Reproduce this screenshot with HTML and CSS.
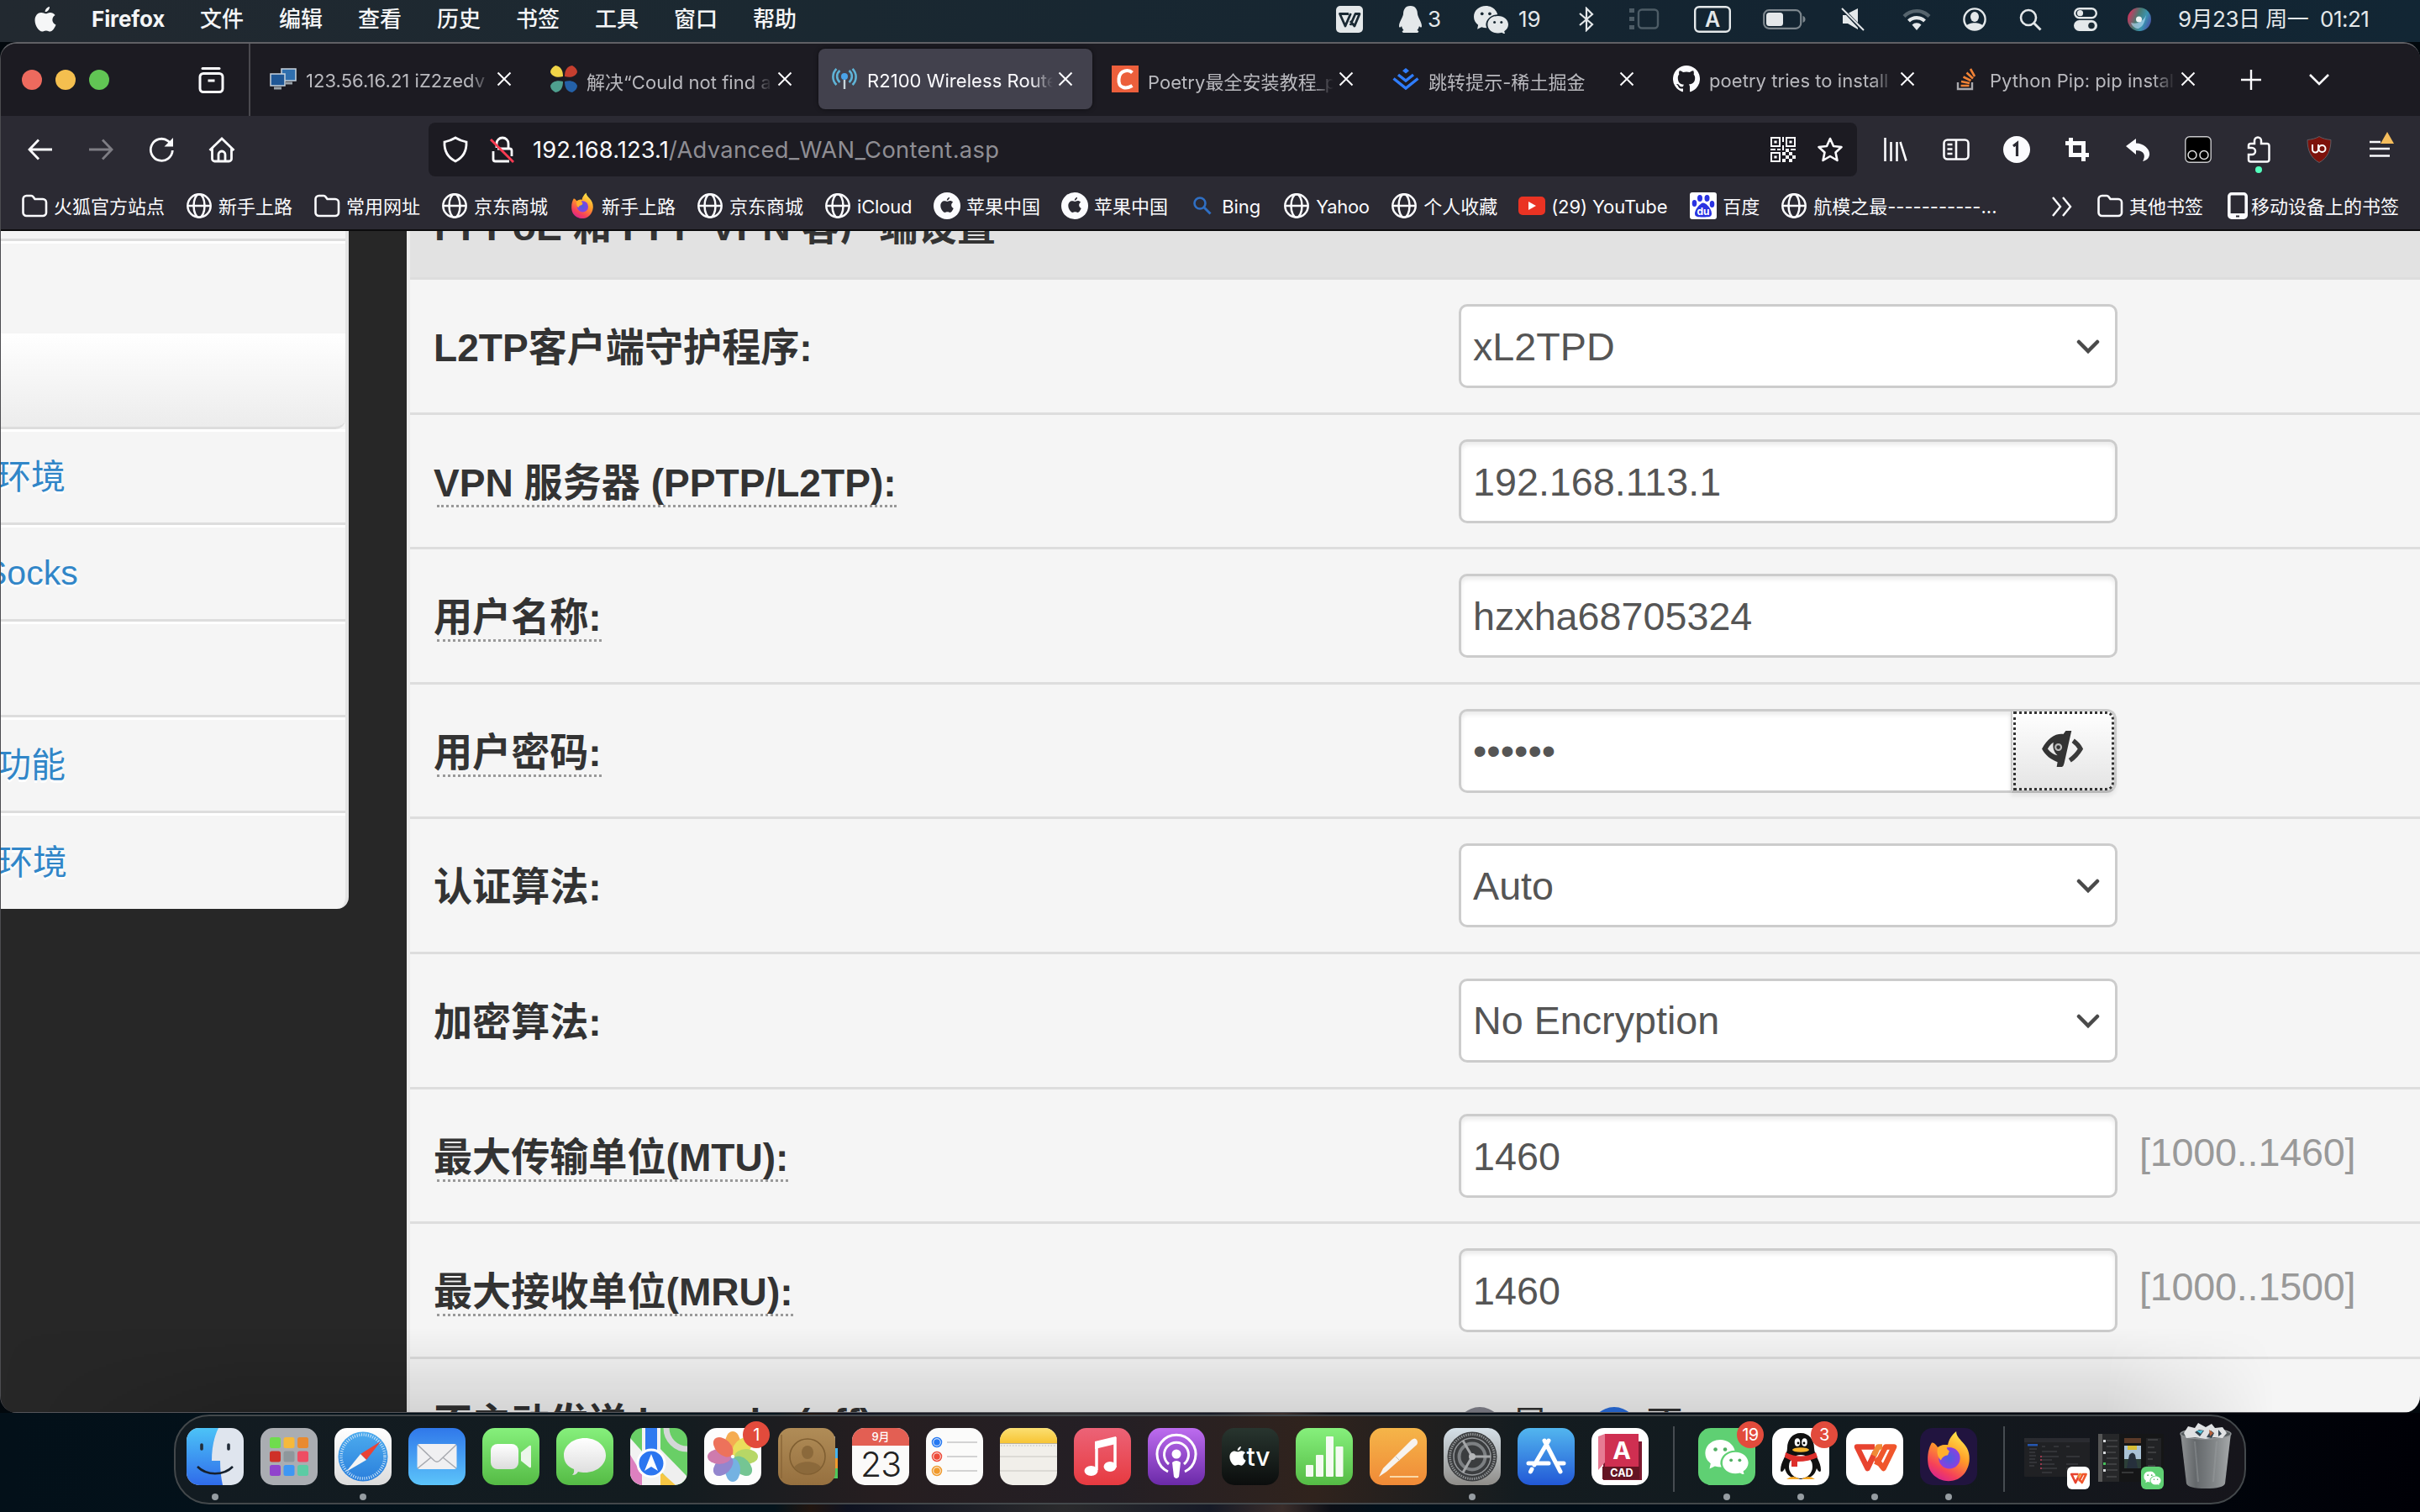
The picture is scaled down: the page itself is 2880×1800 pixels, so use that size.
FILE: index.html
```html
<!DOCTYPE html>
<html lang="zh-CN">
<head>
<meta charset="utf-8">
<title>R2100 Wireless Router</title>
<link rel="stylesheet" href="styles.css">
</head>
<body>
<svg class="defs" width="0" height="0">
  <defs>
    <linearGradient id="gBlue" x1="0" y1="0" x2="0" y2="1"><stop offset="0" stop-color="#3078ea"/><stop offset="1" stop-color="#5cc4fa"/></linearGradient>
    <linearGradient id="gFace" x1="0" y1="0" x2="0" y2="1"><stop offset="0" stop-color="#4cc3f7"/><stop offset="1" stop-color="#2f6bea"/></linearGradient>
    <linearGradient id="gSky" x1="0" y1="0" x2="0" y2="1"><stop offset="0" stop-color="#4cabee"/><stop offset="1" stop-color="#2a7fdc"/></linearGradient>
    <linearGradient id="gGreen" x1="0" y1="0" x2="0" y2="1"><stop offset="0" stop-color="#86f07c"/><stop offset="1" stop-color="#55bb45"/></linearGradient>
    <linearGradient id="gWhite" x1="0" y1="0" x2="0" y2="1"><stop offset="0" stop-color="#fff"/><stop offset="1" stop-color="#dcdcdc"/></linearGradient>
    <linearGradient id="gRed" x1="0" y1="0" x2="0" y2="1"><stop offset="0" stop-color="#ec6377"/><stop offset="1" stop-color="#e73a40"/></linearGradient>
    <linearGradient id="gPurple" x1="0" y1="0" x2="0" y2="1"><stop offset="0" stop-color="#bd6cef"/><stop offset="1" stop-color="#6b2aa8"/></linearGradient>
    <linearGradient id="gOrange" x1="0" y1="0" x2="0" y2="1"><stop offset="0" stop-color="#f5b549"/><stop offset="1" stop-color="#f08a37"/></linearGradient>
    <linearGradient id="gStore" x1="0" y1="0" x2="0" y2="1"><stop offset="0" stop-color="#52b6ef"/><stop offset="1" stop-color="#2258d6"/></linearGradient>
    <linearGradient id="gGear" x1="0" y1="0" x2="0" y2="1"><stop offset="0" stop-color="#d5e0e8"/><stop offset="1" stop-color="#8f8d89"/></linearGradient>
    <linearGradient id="gTv" x1="0" y1="0" x2="0" y2="1"><stop offset="0" stop-color="#28352f"/><stop offset="1" stop-color="#0b0d0d"/></linearGradient>
    <linearGradient id="gBook" x1="0" y1="0" x2="0" y2="1"><stop offset="0" stop-color="#b08c57"/><stop offset="1" stop-color="#96703f"/></linearGradient>
    <linearGradient id="gYellow" x1="0" y1="0" x2="0" y2="1"><stop offset="0" stop-color="#fbdf72"/><stop offset="1" stop-color="#f7c434"/></linearGradient>
    <linearGradient id="gFox" x1=".8" y1="0" x2=".3" y2="1"><stop offset="0" stop-color="#fff14f"/><stop offset=".45" stop-color="#ff9a28"/><stop offset=".8" stop-color="#f5405a"/><stop offset="1" stop-color="#d9258e"/></linearGradient>
    <radialGradient id="gOrb"><stop offset="0" stop-color="#4a5fe0"/><stop offset="1" stop-color="#8a3fe0"/></radialGradient>
    <linearGradient id="gCan" x1="0" y1="0" x2="1" y2="0"><stop offset="0" stop-color="#8f9294"/><stop offset=".3" stop-color="#64686b"/><stop offset=".7" stop-color="#84888a"/><stop offset="1" stop-color="#a6a9ab"/></linearGradient>
    <linearGradient id="gSiri" x1="0" y1=".3" x2="1" y2=".7"><stop offset="0" stop-color="#d8305c"/><stop offset=".4" stop-color="#4a7a72"/><stop offset=".7" stop-color="#3a94b0"/><stop offset="1" stop-color="#4a4fa8"/></linearGradient>
  </defs>
  <symbol id="apple" viewBox="0 0 26 32"><path d="M18 1c.2 3-2.300 6.200-5.300 6.300C12.400 4.500 15 1.500 18 1zM13.300 9.300c1.300 0 3-1.400 5.600-1.400 2 0 4.300 1 5.700 3-4.800 2.900-4 9.600.9 11.500-1 2.900-3.900 8.100-6.900 8.100-1.800 0-2.500-1.100-4.700-1.100-2.300 0-3.100 1.100-4.800 1.100C5.300 30.500.5 23.500.5 17.300c0-6 3.900-9.200 7.500-9.200 2.300 0 4 1.200 5.300 1.200z" fill="currentColor"/></symbol>
  <symbol id="folder" viewBox="0 0 32 32"><path d="M2.500 8a4 4 0 0 1 4-4h5.500a3 3 0 0 1 2.500 1.200L16.500 8H26a4 4 0 0 1 4 4v12a4 4 0 0 1-4 4H6.500a4 4 0 0 1-4-4z" fill="none" stroke="currentColor" stroke-width="2.600"/></symbol>
  <symbol id="globe" viewBox="0 0 32 32"><g fill="none" stroke="currentColor" stroke-width="2.500"><circle cx="16" cy="16" r="13.700"/><ellipse cx="16" cy="16" rx="6.500" ry="13.700"/><path d="M2.300 16h27.400"/></g></symbol>
  <symbol id="fox" viewBox="0 0 68 68"><path d="M12 16c3-1 6 3 8 6 4-3 9-4 13-3C34 12 38 6 44 1c0 6 4 9 8 14 7 7 10 15 9 25-2 16-13 26-27 26S8 56 7 42C6 32 8 23 12 16z" fill="url(#gFox)"/><circle cx="35" cy="36" r="14" fill="url(#gOrb)"/><path d="M20 22c4-3 9-4 13-3-2 3-2 5 2 8l-2 5c-5 1-8 3-9 7-4-4-6-10-4-17z" fill="#ffb02c"/></symbol>
  <symbol id="wchat" viewBox="0 0 40 32"><g fill="currentColor"><path d="M14 0C6 0 0 5.500 0 12.500c0 4 2 7.200 5 9.500l-1 5 5-2.500c2 .6 4 1 6 .9A11 11 0 0 1 14 22c0-6.500 6-12 13.500-12C26 4 20.500 0 14 0z"/><path d="M28 11.500c-7 0-12 4.600-12 10s5 10 12 10c1.500 0 3-.2 4.300-.6l4 2-1-3.600c3-2 4.700-4.800 4.700-7.800 0-5.400-5-10-12-10z"/></g><g fill="var(--eye)"><circle cx="9.500" cy="9" r="1.800"/><circle cx="18.500" cy="9" r="1.800"/><circle cx="24" cy="19" r="1.500"/><circle cx="32" cy="19" r="1.500"/></g></symbol>
  <symbol id="wps" viewBox="0 0 68 68"><g fill="none" stroke-width="6.500" stroke-linejoin="round"><path d="M34 22.500H13L25.500 48 35 28" stroke="#e8432f"/><path d="M35 36l9.500 12L57 22.500H47L36 44" stroke="#f0562c"/><path d="M33 33l5-10.500h5" stroke="#f08a36"/></g></symbol>
  <symbol id="close" viewBox="0 0 20 20"><path d="M2.500 2.500l15 15M17.500 2.500l-15 15" stroke="#fbfbfe" stroke-width="2" fill="none"/></symbol>
</svg>

<header class="menubar">
  <nav class="menus">
    <svg class="apple-mark" viewBox="0 0 26 32"><use href="#apple"/></svg>
    <span class="app-name">Firefox</span><span>文件</span><span>编辑</span><span>查看</span><span>历史</span><span>书签</span><span>工具</span><span>窗口</span><span>帮助</span>
  </nav>
  <div class="status">
    <svg width="32" height="32" viewBox="0 0 32 32"><rect width="32" height="32" rx="5" fill="#e4e8ea"/><path d="M15 9.500H4.500L11 24l6.500-15M17 18l5 6 6-14.500h-5L17 23" fill="none" stroke="#1a2933" stroke-width="2.800" stroke-linejoin="round"/></svg>
    <svg width="27" height="32" viewBox="0 0 27 32"><path d="M13.500 0C7 0 5 5 5 10c-1 5-5 9-5 14 0 2 1.500 2 3 0 .5 2 1.500 4 2.500 5-3 1-2 3 1 3h14c3 0 4-2 1-3 1-1 2-3 2.500-5 1.500 2 3 2 3 0 0-5-4-9-5-14 0-5-2-10-8.500-10z" fill="#e4e8ea"/></svg>
    <span>3</span>
    <svg class="wx-status" width="41" height="33" viewBox="0 0 40 32"><use href="#wchat"/></svg>
    <span>19</span>
    <svg width="18" height="30" viewBox="0 0 18 30"><path d="M1 8l15 13-7 7V2l7 7L1 22" fill="none" stroke="#e4e8ea" stroke-width="2.200"/></svg>
    <svg width="36" height="26" viewBox="0 0 36 26"><rect x="11" y="1.500" width="23" height="22" rx="4" fill="none" stroke="#4d5c66" stroke-width="2.400"/><path d="M0 0h6v5H0zM0 10h6v5H0zM0 20h6v5H0z" fill="#4d5c66"/></svg>
    <svg width="44" height="32" viewBox="0 0 44 32"><rect x="1.200" y="1.200" width="41.600" height="29.600" rx="5" fill="none" stroke="#e4e8ea" stroke-width="2.400"/><text x="22" y="25" text-anchor="middle" class="input-letter">A</text></svg>
    <svg width="51" height="24" viewBox="0 0 51 24"><rect x="1.200" y="1.200" width="44" height="21.600" rx="6" fill="none" stroke="#7d878e" stroke-width="2.200"/><rect x="4" y="4" width="20" height="16" rx="3.500" fill="#e4e8ea"/><path d="M47.500 8v8c2-.6 3-2.200 3-4s-1-3.400-3-4z" fill="#7d878e"/></svg>
    <svg width="28" height="28" viewBox="0 0 28 28"><path d="M20 1v17L9 6.500zM2 9h4l14 15v2L8 19H2z" fill="#e4e8ea"/><path d="M1 1l26 26" stroke="#e4e8ea" stroke-width="2"/></svg>
    <svg width="34" height="26" viewBox="0 0 34 26"><g fill="none" stroke-width="4.200"><path d="M2 9.500a21 21 0 0 1 30 0" stroke="#56646d"/><path d="M7.500 15a13.500 13.500 0 0 1 19 0" stroke="#e4e8ea"/></g><path d="M17 26l-5.500-6.500a8 8 0 0 1 11 0z" fill="#e4e8ea"/></svg>
    <svg width="28" height="28" viewBox="0 0 28 28"><circle cx="14" cy="14" r="12.600" fill="none" stroke="#e4e8ea" stroke-width="2.400"/><ellipse cx="14" cy="11" rx="5" ry="6" fill="#e4e8ea"/><path d="M4 22c3-5 17-5 20 0-5 6-15 6-20 0z" fill="#e4e8ea"/></svg>
    <svg width="27" height="27" viewBox="0 0 27 27"><circle cx="11" cy="11" r="9" fill="none" stroke="#e4e8ea" stroke-width="2.600"/><path d="M17.500 17.500l8 8" stroke="#e4e8ea" stroke-width="3"/></svg>
    <svg width="28" height="28" viewBox="0 0 28 28"><rect x="1.200" y="1.200" width="25.600" height="11" rx="5.500" fill="none" stroke="#e4e8ea" stroke-width="2.400"/><circle cx="7.500" cy="6.700" r="3.600" fill="#e4e8ea"/><rect y="15" width="28" height="13" rx="6.500" fill="#e4e8ea"/><circle cx="21" cy="21.500" r="3.800" fill="#1a2933"/></svg>
    <svg width="28" height="28" viewBox="0 0 28 28"><circle cx="14" cy="14" r="14" fill="url(#gSiri)"/><path d="M4 18c6 2 14 0 18-9-2 9-3 13-9 16C9 25 5 22 4 18z" fill="#bfe3ff" opacity=".6"/><circle cx="13.500" cy="14" r="3.500" fill="#fff" opacity=".9"/></svg>
    <span class="clock">9月23日 周一&nbsp; 01:21</span>
  </div>
</header>

<main class="window">
  <div class="tabbar">
    <div class="win-controls"><i class="light red"></i><i class="light amber"></i><i class="light green"></i>
      <svg class="archive" width="32" height="32" viewBox="0 0 32 32"><g fill="none" stroke="#fbfbfe" stroke-width="3"><path d="M6 2.500h20" stroke-linecap="round"/><rect x="3" y="8.500" width="27" height="22" rx="4"/></g><rect x="12.500" y="15.500" width="8" height="3" fill="#fbfbfe"/></svg>
    </div>
    <div class="tabs">
      <div class="tab">
        <svg width="32" height="32" viewBox="0 0 32 32"><rect x="14" y="4" width="17" height="14" fill="#2f6fae" stroke="#c8d4de" stroke-width="1.500"/><rect x="1" y="10" width="17" height="14" fill="#1f5796" stroke="#c8d4de" stroke-width="1.500"/><path d="M5 27h9M19 21h8" stroke="#9aa3aa" stroke-width="3"/></svg>
        <span class="title">123.56.16.21 iZ2zedv</span><svg class="x" width="20" height="20"><use href="#close"/></svg></div>
      <div class="tab">
        <svg width="32" height="32" viewBox="0 0 32 32"><path d="M6 0c6 1 9 5 9 13C8 15 2 13 0 8c0-3 2-6 6-8z" fill="#f0d447"/><path d="M26 0c-6 1-9 5-9 13 7 2 13 0 15-5 0-3-2-6-6-8z" fill="#c63f2f"/><path d="M6 32c6-1 9-5 9-13-7-2-13 0-15 5 0 3 2 6 6 8z" fill="#4fa08f"/><path d="M26 32c-6-1-9-5-9-13 7-2 13 0 15 5 0 3-2 6-6 8z" fill="#2461a8"/></svg>
        <span class="title">解决“Could not find a</span><svg class="x" width="20" height="20"><use href="#close"/></svg></div>
      <div class="tab active">
        <svg width="32" height="32" viewBox="0 0 32 32"><g fill="none" stroke="#5fb3d6" stroke-width="2.600"><path d="M10.500 20a9 9 0 0 1 0-14M21.500 20a9 9 0 0 0 0-14M6.500 23a13 13 0 0 1 0-19M25.500 23a13 13 0 0 0 0-19"/></g><circle cx="16" cy="13" r="4" fill="#4aa3e8"/><path d="M16 17v11" stroke="#c9d6dc" stroke-width="2.400"/></svg>
        <span class="title">R2100 Wireless Route</span><svg class="x" width="20" height="20"><use href="#close"/></svg></div>
      <div class="tab">
        <svg width="32" height="32" viewBox="0 0 32 32"><rect width="32" height="32" fill="#ec5f3c"/><path d="M24.500 8.500C21 5 9.500 4 8.500 16S18 28 24.500 24" fill="none" stroke="#fff" stroke-width="4"/></svg>
        <span class="title">Poetry最全安装教程_p</span><svg class="x" width="20" height="20"><use href="#close"/></svg></div>
      <div class="tab">
        <svg width="32" height="32" viewBox="0 0 32 32"><path d="M16 3l4 3.200-4 3.200-4-3.200z" fill="#2f7dff"/><path d="M7 11l9 7 9-7M1.500 15.500L16 27l14.500-11.500" fill="none" stroke="#2f7dff" stroke-width="3.400"/></svg>
        <span class="title">跳转提示-稀土掘金</span><svg class="x" width="20" height="20"><use href="#close"/></svg></div>
      <div class="tab">
        <svg width="32" height="32" viewBox="0 0 16 16"><path d="M8 0a8 8 0 0 0-2.500 15.600c.4.100.5-.2.500-.4v-1.500c-2.200.5-2.700-1-2.700-1-.4-.9-.9-1.200-.9-1.200-.7-.5.100-.5.100-.5.800.1 1.200.8 1.200.8.700 1.200 1.900.9 2.300.7.100-.5.300-.9.500-1.100-1.800-.2-3.600-.9-3.600-4 0-.9.300-1.600.8-2.100-.1-.2-.4-1 .1-2.100 0 0 .7-.2 2.200.8a7.700 7.700 0 0 1 4 0c1.500-1 2.200-.8 2.200-.8.400 1.100.2 1.900.1 2.100.5.600.8 1.300.8 2.100 0 3.100-1.900 3.700-3.700 3.900.3.300.6.800.6 1.500v2.400c0 .2.100.5.500.4A8 8 0 0 0 8 0z" fill="#fbfbfe"/></svg>
        <span class="title">poetry tries to install</span><svg class="x" width="20" height="20"><use href="#close"/></svg></div>
      <div class="tab">
        <svg width="32" height="32" viewBox="0 0 32 32"><path d="M5 20v8h17v-8" fill="none" stroke="#a9a9ad" stroke-width="2.400"/><path d="M8.500 24h10M9 19l10 2M11.500 13.500l9 4.500M15.500 8.500l7.500 7M20 4l5 9" stroke="#ef8236" stroke-width="2.600"/></svg>
        <span class="title">Python Pip: pip instal</span><svg class="x" width="20" height="20"><use href="#close"/></svg></div>
    </div>
    <div class="tab-tools">
      <svg width="26" height="26" viewBox="0 0 26 26"><path d="M13 1v24M1 13h24" stroke="#fbfbfe" stroke-width="2.400"/></svg>
      <svg width="26" height="16" viewBox="0 0 26 16"><path d="M2 2l11 11L24 2" fill="none" stroke="#fbfbfe" stroke-width="2.600"/></svg>
    </div>
  </div>

  <div class="toolbar">
    <div class="nav-icons">
      <svg width="32" height="32" viewBox="0 0 32 32"><path d="M14 4.500L3 16l11 11.500M3.500 16H30" fill="none" stroke="#fbfbfe" stroke-width="2.800"/></svg>
      <svg width="32" height="32" viewBox="0 0 32 32"><path d="M18 4.500L29 16 18 27.500M28.500 16H2" fill="none" stroke="#7e7d84" stroke-width="2.800"/></svg>
      <svg width="32" height="32" viewBox="0 0 32 32"><path d="M29.300 17A13 13 0 1 1 24 5.800l3.500 3.500" fill="none" stroke="#fbfbfe" stroke-width="2.800"/><path d="M30 2v10.500H19.500z" fill="#fbfbfe"/></svg>
      <svg width="32" height="32" viewBox="0 0 32 32"><path d="M1.500 17L16 3l14.500 14M4.500 14.500V27a3 3 0 0 0 3 3h17a3 3 0 0 0 3-3V14.500M12 30v-8a4 4 0 0 1 8 0v8" fill="none" stroke="#fbfbfe" stroke-width="2.800"/></svg>
    </div>
    <div class="urlbar">
      <svg width="32" height="32" viewBox="0 0 32 32"><path d="M16 2c4 2.500 8.500 4 13 5 .5 11-4 18.500-13 23C7 25.500 2.500 18 3 7c4.500-1 9-2.500 13-5z" fill="none" stroke="#fbfbfe" stroke-width="2.800"/></svg>
      <svg class="lock" width="32" height="32" viewBox="0 0 32 32"><path d="M9 14V9a7 7 0 0 1 14 0v5M5 18v9.500A2.500 2.500 0 0 0 7.500 30H24M10 15h14.500a2.500 2.500 0 0 1 2.500 2.500V24" fill="none" stroke="#fbfbfe" stroke-width="2.800"/><path d="M2 4l27 27" stroke="#ff3b52" stroke-width="2.800"/></svg>
      <span class="url"><b>192.168.123.1</b>/Advanced_WAN_Content.asp</span>
      <svg class="qr" width="30" height="30" viewBox="0 0 15 15" fill="#fbfbfe"><path fill-rule="evenodd" d="M0 0h6v6H0zM1 1v4h4V1zM9 0h6v6H9zM10 1v4h4V1zM0 9h6v6H0zM1 10v4h4v-4z"/><path d="M2.200 2.200h1.600v1.600H2.200zM11.200 2.200h1.600v1.600h-1.600zM2.200 11.200h1.600v1.600H2.200zM7 0h1v3H7zM7 5h1v3H7zM0 7h3v1H0zM4 7h2v1H4zM9 7h2v2H9zM12 7h3v1h-3zM7 9h2v2H7zM11 9h2v2h-2zM9 11h2v2H9zM13 11h2v2h-2zM7 13h2v2H7zM11 13h2v2h-2z"/></svg>
      <svg width="32" height="32" viewBox="0 0 32 32"><path d="M16 3l4 9 9.500 1-7 6.500 2 9.500L16 24l-8.500 5 2-9.500-7-6.500L12 12z" fill="none" stroke="#fbfbfe" stroke-width="2.600" stroke-linejoin="round"/></svg>
    </div>
    <div class="ext-icons">
      <svg viewBox="0 0 32 32"><path d="M3.500 2v28M10.500 7v23M17.500 7v23M21.500 7l7 22.500" fill="none" stroke="#fbfbfe" stroke-width="2.600"/></svg>
      <svg viewBox="0 0 32 32"><g fill="none" stroke="#fbfbfe" stroke-width="2.600"><rect x="1.500" y="4.500" width="29" height="23" rx="4"/><path d="M16 4v24M5.500 10h6M5.500 15.500h6M5.500 21h6"/></g></svg>
      <svg viewBox="0 0 32 32"><circle cx="16" cy="16" r="16" fill="#fbfbfe"/><path d="M12 12l4.500-3.500V24" fill="none" stroke="#2b2a33" stroke-width="3.200"/></svg>
      <svg viewBox="0 0 32 32"><path d="M8.500 2v20.500H30M2 8.500h21.500V30" fill="none" stroke="#fbfbfe" stroke-width="5"/></svg>
      <svg viewBox="0 0 32 32"><path d="M2 12L14 3v5.500c10 0 17 8 16 14-1 4-2.500 6-8 7.500 4-7 1.500-13-8-13V22z" fill="#fbfbfe"/></svg>
      <svg viewBox="0 0 32 32"><rect x=".8" y=".8" width="30.400" height="30.400" rx="5" fill="#000" stroke="#c9c9cc" stroke-width="1.400"/><circle cx="9" cy="22.500" r="5" fill="none" stroke="#ddd" stroke-width="1.500"/><circle cx="23" cy="22.500" r="5" fill="none" stroke="#ddd" stroke-width="1.500"/></svg>
      <div class="puzzle"><svg viewBox="0 0 32 32"><path d="M11 9V5.500a4 4 0 0 1 8 0V9h7a2.500 2.500 0 0 1 2.500 2.500V28a2.500 2.500 0 0 1-2.500 2.500H6.500A2.500 2.500 0 0 1 4 28v-6h4a4 4 0 0 0 0-8H4v-2.500A2.500 2.500 0 0 1 6.500 9z" fill="none" stroke="#fbfbfe" stroke-width="2.500"/></svg><i class="ext-dot"></i></div>
      <svg viewBox="0 0 32 32"><path d="M16 .5c4 2.500 9 3.500 14 4C30 17 26 26 16 31.500 6 26 2 17 2 4.500c5-.5 10-1.500 14-4z" fill="#7d120b" stroke="#5f5c63"/><path d="M8 10v6a3.500 3.500 0 0 0 7 0v-6" fill="none" stroke="#fff" stroke-width="2"/><circle cx="19.500" cy="15" r="4" fill="none" stroke="#fff" stroke-width="2"/></svg>
      <div class="menu-btn"><svg viewBox="0 0 32 32"><path d="M4 7h13M4 15h24M4 23.500h24" stroke="#fbfbfe" stroke-width="2.600"/></svg><i class="warn"></i></div>
    </div>
  </div>

  <div class="bookmarks">
    <a><svg><use href="#folder"/></svg>火狐官方站点</a>
    <a><svg><use href="#globe"/></svg>新手上路</a>
    <a><svg><use href="#folder"/></svg>常用网址</a>
    <a><svg><use href="#globe"/></svg>京东商城</a>
    <a><svg><use href="#fox"/></svg>新手上路</a>
    <a><svg><use href="#globe"/></svg>京东商城</a>
    <a class="w-icloud"><svg><use href="#globe"/></svg>iCloud</a>
    <a><svg viewBox="0 0 32 32"><circle cx="16" cy="16" r="16" fill="#fbfbfe"/><g color="#2b2a33"><use href="#apple" x="8" y="5" width="16" height="20"/></g></svg>苹果中国</a>
    <a><svg viewBox="0 0 32 32"><circle cx="16" cy="16" r="16" fill="#fbfbfe"/><g color="#2b2a33"><use href="#apple" x="8" y="5" width="16" height="20"/></g></svg>苹果中国</a>
    <a class="w-bing"><svg viewBox="0 0 32 32"><circle cx="13" cy="13" r="6.500" fill="none" stroke="#2f6fc4" stroke-width="2.600"/><path d="M17.500 17.500l8 8" stroke="#2f6fc4" stroke-width="3"/></svg>Bing</a>
    <a class="w-yahoo"><svg><use href="#globe"/></svg>Yahoo</a>
    <a><svg><use href="#globe"/></svg>个人收藏</a>
    <a class="w-tube"><svg viewBox="0 0 32 32"><rect y="5" width="32" height="22" rx="5" fill="#ea3323"/><path d="M12 11v10l9-5z" fill="#fff"/></svg>(29) YouTube</a>
    <a><svg viewBox="0 0 32 32"><rect width="32" height="32" rx="3" fill="#fff"/><g fill="#2932e1"><ellipse cx="12" cy="7" rx="3" ry="4"/><ellipse cx="20.500" cy="7" rx="3" ry="4"/><ellipse cx="5.500" cy="13" rx="2.800" ry="4"/><ellipse cx="26.500" cy="14" rx="2.800" ry="4"/><path d="M16 12.500c4 0 10 8 10 12.500s-3 4.500-10 4.500S6 29 6 25s6-12.500 10-12.500z"/></g><text x="16" y="27" text-anchor="middle" class="du">du</text></svg>百度</a>
    <a><svg><use href="#globe"/></svg>航模之最<span class="dashes">-----------...</span></a>
    <div class="bm-right">
      <svg class="more" viewBox="0 0 26 26"><path d="M2 2l9 11-9 11M14 2l9 11-9 11" fill="none" stroke="#fbfbfe" stroke-width="2.400"/></svg>
      <a><svg><use href="#folder"/></svg>其他书签</a>
      <a class="phone"><svg viewBox="0 0 24 32"><rect x="1.800" y="1.800" width="20.400" height="28.400" rx="3" fill="none" stroke="#fbfbfe" stroke-width="3.600"/><path d="M2 27.500h20" stroke="#fbfbfe" stroke-width="5"/><path d="M10 28.500h4" stroke="#2b2a33" stroke-width="2"/></svg>移动设备上的书签</a>
    </div>
  </div>

  <div class="page">
    <aside class="side">
      <ul>
        <li class="cut"></li>
        <li class="before"></li>
        <li class="current"></li>
        <li><a>环境</a></li>
        <li><a class="en">Socks</a></li>
        <li></li>
        <li><a>功能</a></li>
        <li><a class="last">环境</a></li>
      </ul>
    </aside>
    <section class="form">
      <h3><span>PPPoE 和 PPP VPN 客户端设置</span></h3>
      <div class="row"><label>L2TP客户端守护程序:</label><div class="select">xL2TPD<svg viewBox="0 0 28 18"><path d="M3 3l11 11L25 3" /></svg></div></div>
      <div class="row"><label><u>VPN 服务器 (PPTP/L2TP):</u></label><input class="field" type="text" value="192.168.113.1"></div>
      <div class="row"><label><u>用户名称:</u></label><input class="field" type="text" value="hzxha68705324"></div>
      <div class="row"><label><u>用户密码:</u></label><div class="group"><input class="field pass" type="text" value="••••••"><button class="eye" type="button"><svg viewBox="0 0 50 44"><path d="M0 22C7 9 16 3 26 4l3-4h7L27 40q-1 5-5 4h-4l1-6C11 35 4 30 0 22z" fill="#333"/><path d="M7 22c2-4 4-6 7-8-1 6 0 11 5 16-5-1-9-4-12-8z" fill="#e8e8e8"/><circle cx="20" cy="20" r="3.500" fill="none" stroke="#bbb" stroke-width="2.200"/><path d="M38 12c4 3 7 6 9 10-3 5-7 10-13 14" fill="none" stroke="#3a3a3a" stroke-width="5.500"/></svg></button></div></div>
      <div class="row"><label>认证算法:</label><div class="select">Auto<svg viewBox="0 0 28 18"><path d="M3 3l11 11L25 3" /></svg></div></div>
      <div class="row"><label>加密算法:</label><div class="select">No Encryption<svg viewBox="0 0 28 18"><path d="M3 3l11 11L25 3" /></svg></div></div>
      <div class="row"><label><u>最大传输单位(MTU):</u></label><input class="field" type="text" value="1460"><span class="hint">[1000..1460]</span></div>
      <div class="row"><label><u>最大接收单位(MRU):</u></label><input class="field" type="text" value="1460"><span class="hint">[1000..1500]</span></div>
      <div class="row final"><label>不主动发送 lcp-echo(off)</label><div class="radios"><i></i><span>是</span><i class="on"></i><span>否</span></div></div>
    </section>
    <div class="dock-shade"></div>
  </div>
</main>

<footer class="desk">
  <div class="dock">
    <div class="app run"><svg viewBox="0 0 68 68"><rect width="68" height="68" rx="15" fill="#dfe5ee"/><path d="M15 0h23c-6 12-8 26-8 39h10c0 10 1 20 3 29H15A15 15 0 0 1 0 53V15A15 15 0 0 1 15 0z" fill="url(#gFace)"/><path d="M18 20v5M50 20v5" stroke="#222c38" stroke-width="3.600" stroke-linecap="round"/><path d="M13 46c11 11 31 11 42 0" fill="none" stroke="#16202c" stroke-width="2.600"/></svg></div>
    <div class="app"><svg viewBox="0 0 68 68"><rect width="68" height="68" rx="15" fill="#aaadb2"/><g><rect x="11" y="11" width="13" height="13" rx="2.500" fill="#6fdc4e"/><rect x="27.500" y="11" width="13" height="13" rx="2.500" fill="#f6b93b"/><rect x="44" y="11" width="13" height="13" rx="2.500" fill="#e98a30"/><rect x="11" y="27.500" width="13" height="13" rx="2.500" fill="#cf3128"/><rect x="27.500" y="27.500" width="13" height="13" rx="2.500" fill="#8e979c"/><rect x="44" y="27.500" width="13" height="13" rx="2.500" fill="#ee4d63"/><rect x="11" y="44" width="13" height="13" rx="2.500" fill="#9044cc"/><rect x="27.500" y="44" width="13" height="13" rx="2.500" fill="#3f97f3"/><rect x="44" y="44" width="13" height="13" rx="2.500" fill="#5ccba4"/></g></svg></div>
    <div class="app run"><svg viewBox="0 0 68 68"><rect width="68" height="68" rx="15" fill="url(#gWhite)"/><circle cx="34" cy="34" r="29.500" fill="url(#gSky)"/><circle cx="34" cy="34" r="26" fill="none" stroke="#cfe6f8" stroke-width="3.600" stroke-dasharray="1 1.720"/><path d="M55 16L38 38l-7-7z" fill="#ea4335"/><path d="M14 52l17-21 7 7z" fill="#f4f4f4"/></svg></div>
    <div class="app"><svg viewBox="0 0 68 68"><rect width="68" height="68" rx="15" fill="url(#gBlue)"/><rect x="10.500" y="19" width="47" height="30" rx="3" fill="#f0f0f2"/><path d="M11 20l20 19q3 2.500 6 0l20-19M11 48l16-13M57 48L41 35" fill="none" stroke="#a8aab0" stroke-width="1.500"/></svg></div>
    <div class="app"><svg viewBox="0 0 68 68"><rect width="68" height="68" rx="15" fill="url(#gGreen)"/><rect x="10" y="19" width="33" height="30" rx="8" fill="url(#gWhite)"/><path d="M46 29l10-8q2-1 2 1v24q0 2-2 1l-10-8z" fill="#ecf6ea"/></svg></div>
    <div class="app"><svg viewBox="0 0 68 68"><rect width="68" height="68" rx="15" fill="url(#gGreen)"/><path d="M34 12c14 0 25 9 25 20.500S48 53 34 53c-3 0-5-.3-8-1-2 3-4 4-7 4 2-2 2.500-4 2-7C13 46 9 40 9 32.500 9 21 20 12 34 12z" fill="url(#gWhite)"/></svg></div>
    <div class="app"><svg class="round" viewBox="0 0 68 68"><path d="M0 0h68v68H0z" fill="#69cf66"/><path d="M0 12l50 56H0z" fill="#f2f2f2"/><path d="M0 32l22 36H0z" fill="#dd80c0"/><path d="M35 24l33 34v10H52L35 50z" fill="#efefef"/><path d="M36 52l18 16H36z" fill="#f7c744"/><circle cx="68" cy="0" r="25" fill="none" stroke="#d5d7d8" stroke-width="7"/><path d="M14 0h22v68H14z" fill="#f3f3f3"/><path d="M18 0h14v38H18z" fill="#2f7af0"/><circle cx="25" cy="42" r="16" fill="#2c76f0" stroke="#fff" stroke-width="3"/><path d="M25 31l8 20-8-5-8 5z" fill="#fff"/></svg></div>
    <div class="app"><svg viewBox="0 0 68 68"><rect width="68" height="68" rx="15" fill="#fdfdfd"/><g opacity=".82"><ellipse cx="34" cy="18" rx="9" ry="14" fill="#f49b2c"/><ellipse cx="34" cy="18" rx="9" ry="14" fill="#e8d838" transform="rotate(45 34 34)"/><ellipse cx="34" cy="18" rx="9" ry="14" fill="#a8cf45" transform="rotate(90 34 34)"/><ellipse cx="34" cy="18" rx="9" ry="14" fill="#58b97c" transform="rotate(135 34 34)"/><ellipse cx="34" cy="18" rx="9" ry="14" fill="#56a2dd" transform="rotate(180 34 34)"/><ellipse cx="34" cy="18" rx="9" ry="14" fill="#7c6cc4" transform="rotate(225 34 34)"/><ellipse cx="34" cy="18" rx="9" ry="14" fill="#c45f9c" transform="rotate(270 34 34)"/><ellipse cx="34" cy="18" rx="9" ry="14" fill="#ea5438" transform="rotate(315 34 34)"/></g></svg><b class="badge">1</b></div>
    <div class="app"><svg class="spill" viewBox="0 0 72 68"><path d="M64 10h4v14h-4z" fill="#9aa0a4"/><path d="M64 24h7v12h-7z" fill="#45b4ee"/><path d="M64 36h7v12h-7z" fill="#f09a2c"/><path d="M64 48h7v12h-7z" fill="#4fc95c"/><rect width="68" height="68" rx="15" fill="url(#gBook)"/><path d="M4 8v52" stroke="#8b6738" stroke-width="1.500"/><g fill="none" stroke="#7f5e31" stroke-width="1.500"><circle cx="35" cy="34" r="21"/></g><ellipse cx="35" cy="29" rx="7" ry="8" fill="#8b693b"/><path d="M19 47c5-9 27-9 32 0-8 10-24 10-32 0z" fill="#8b693b"/></svg></div>
    <div class="app cal"><span>9月</span><b>23</b></div>
    <div class="app"><svg viewBox="0 0 68 68"><rect width="68" height="68" rx="15" fill="#fbfbfa"/><path d="M25 17h36M25 34h36M25 51h36" stroke="#c6c6c6" stroke-width="1.600"/><g fill="none" stroke-width="1.500"><circle cx="13" cy="17" r="5.500" stroke="#2478f2"/><circle cx="13" cy="34" r="5.500" stroke="#ee4b3a"/><circle cx="13" cy="51" r="5.500" stroke="#f09a2c"/></g><circle cx="13" cy="17" r="3.800" fill="#2478f2"/><circle cx="13" cy="34" r="3.800" fill="#ee4b3a"/><circle cx="13" cy="51" r="3.800" fill="#f09a2c"/></svg></div>
    <div class="app"><svg viewBox="0 0 68 68"><rect width="68" height="68" rx="15" fill="#f1efea"/><path d="M0 18v-3A15 15 0 0 1 15 0h38a15 15 0 0 1 15 15v3z" fill="url(#gYellow)"/><path d="M0 18.500h68" stroke="#b7b0a0"/><path d="M1 21h66" stroke="#bbb" stroke-dasharray="1.500 2"/><path d="M0 34h68M0 51h68" stroke="#d5d3ce" stroke-width="1.500"/></svg></div>
    <div class="app"><svg viewBox="0 0 68 68"><rect width="68" height="68" rx="15" fill="url(#gRed)"/><path d="M27 18l22-5v34" fill="none" stroke="#fff" stroke-width="3.500"/><path d="M25 16l25-6v9l-25 6z" fill="#fff"/><path d="M27 18v32" stroke="#fff" stroke-width="3.500"/><ellipse cx="20.500" cy="51" rx="8" ry="6" fill="#fff"/><ellipse cx="43" cy="46" rx="7.500" ry="6" fill="#fff"/></svg></div>
    <div class="app"><svg viewBox="0 0 68 68"><rect width="68" height="68" rx="15" fill="url(#gPurple)"/><g fill="none" stroke="#fff" stroke-width="3"><path d="M24 52a23 23 0 1 1 20 0M25 43a14.500 14.500 0 1 1 18 0"/></g><circle cx="34" cy="31" r="5.500" fill="#fff"/><path d="M29 41q5-4 10 0l-2 17q-3 4-6 0z" fill="#fff"/></svg></div>
    <div class="app"><svg viewBox="0 0 68 68"><rect width="68" height="68" rx="15" fill="url(#gTv)"/><g color="#fff"><use href="#apple" x="9" y="21" width="20" height="25"/></g><text x="29.500" y="45" class="tv">tv</text></svg></div>
    <div class="app"><svg viewBox="0 0 68 68"><rect width="68" height="68" rx="15" fill="url(#gGreen)"/><g fill="#f4fbf2"><rect x="12" y="44" width="9" height="14" rx="1"/><rect x="24" y="32" width="9" height="26" rx="1"/><rect x="36" y="10" width="9" height="48" rx="1"/><rect x="47.500" y="22" width="9" height="36" rx="1"/></g></svg></div>
    <div class="app"><svg viewBox="0 0 68 68"><rect width="68" height="68" rx="15" fill="url(#gOrange)"/><path d="M50 14q4-3 6 0t0 6L20 52l-9 6 5-10z" fill="#f7f3ee"/><path d="M24 58h34" stroke="#fbd9a8" stroke-width="2"/><path d="M31 34l5 5" stroke="#c9bfb2"/></svg></div>
    <div class="app run"><svg viewBox="0 0 68 68"><rect width="68" height="68" rx="15" fill="url(#gGear)"/><circle cx="34" cy="34" r="29.500" fill="#3b3d3f"/><circle cx="34" cy="34" r="26.500" fill="none" stroke="#8d9092" stroke-width="3" stroke-dasharray="1.500 1.200"/><circle cx="34" cy="34" r="22" fill="none" stroke="#94979a" stroke-width="1.500"/><circle cx="34" cy="34" r="15.500" fill="none" stroke="#7d8083" stroke-width="4"/><path d="M34 34h22M34 34L23 15M34 34L23 53" stroke="#a4a6a8" stroke-width="3"/><circle cx="34" cy="34" r="4" fill="#b4b6b8"/></svg></div>
    <div class="app"><svg viewBox="0 0 68 68"><rect width="68" height="68" rx="15" fill="url(#gStore)"/><g stroke="#fff" stroke-width="5" stroke-linecap="round"><path d="M37 15L20 44M32 15l19 37M13 42h24M46 42h9M17 49l-1.500 3"/></g></svg></div>
    <div class="app"><svg viewBox="0 0 68 68"><rect width="68" height="68" rx="15" fill="#fff"/><path d="M14 16h46v46H14z" fill="#7c1930"/><path d="M8 10l8-3v34l-8 9z" fill="#e77a93"/><path d="M16 7h40v39H16z" fill="#cf2f51"/><path d="M13 46h44v15H13z" fill="#641423"/><text x="36" y="37" text-anchor="middle" class="cad-a">A</text><text x="36" y="58" text-anchor="middle" class="cad">CAD</text></svg></div>
    <i class="rule"></i>
    <div class="app run green-app"><svg viewBox="0 0 68 68"><rect width="68" height="68" rx="15" fill="#5fd073"/><use href="#wchat" x="8" y="14" width="52" height="41"/></svg><b class="badge">19</b></div>
    <div class="app run"><svg viewBox="0 0 68 68"><rect width="68" height="68" rx="15" fill="#fff"/><path d="M34 6c10 0 16 8 16 18 0 8 8 16 8 26 0 3-3 3-5-2-2 8-8 13-19 13S17 56 15 48c-2 5-5 5-5 2 0-10 8-18 8-26C18 14 24 6 34 6z" fill="#111"/><ellipse cx="34" cy="46" rx="14" ry="14" fill="#fff"/><ellipse cx="30" cy="17" rx="3.300" ry="4.700" fill="#fff"/><ellipse cx="38.500" cy="17" rx="3.300" ry="4.700" fill="#fff"/><circle cx="31" cy="18" r="1.400"/><circle cx="38" cy="18" r="1.400"/><ellipse cx="34" cy="26" rx="10" ry="2.800" fill="#f7b32d"/><path d="M16 29q18 9 36 0l2 6q-10 5-24 5v6h-7v-7l-8-4z" fill="#dd2f2b"/><path d="M17 61q8-6 16 0zM35 61q8-6 16 0z" fill="#f7a823"/></svg><b class="badge">3</b></div>
    <div class="app run"><svg viewBox="0 0 68 68"><rect width="68" height="68" rx="15" fill="#fff"/><use href="#wps" width="68" height="68"/></svg></div>
    <div class="app run"><svg viewBox="0 0 68 68"><rect width="68" height="68" rx="15" fill="#21143f"/><use href="#fox" x="3" y="3" width="62" height="62"/></svg></div>
    <i class="rule second"></i>
    <div class="thumb one"><svg viewBox="0 0 78 46"><rect width="78" height="46" rx="1" fill="#202124"/><path d="M0 0h78v5H0z" fill="#2a2b30"/><path d="M4 7h12v2.500H4z" fill="#2556b0"/><path d="M6 13h9M6 17h7M6 21h8M6 25h7M6 29h9M6 33h6M21 10h4M35 10h6M50 10h4M21 16h18M21 22h20M21 26h12M21 31h15M21 36h18M21 41h12M50 22h16M50 31h14M50 36h14" stroke="#46484c" stroke-width="1"/><path d="M19 22h2M19 26h2M19 31h2M19 36h2" stroke="#c0405a" stroke-width="1.500"/></svg><svg class="mini" viewBox="0 0 68 68"><rect width="68" height="68" rx="15" fill="#fff"/><use href="#wps" width="68" height="68"/></svg></div>
    <div class="thumb two"><svg viewBox="0 0 78 57"><rect width="78" height="57" rx="1" fill="#151617"/><path d="M0 0h5v57H0z" fill="#555"/><path d="M5 0h20v57H5z" fill="#262729"/><path d="M57 5h18v52H57z" fill="#222325"/><path d="M10 8h13M10 15h13M10 22h11M10 29h13M10 36h12M10 43h13M10 51h12M59 7h12M59 16h8M59 22h10M59 30h6M59 38h9M28 46h14" stroke="#57585b" stroke-width="1.200"/><path d="M6 7h3v3H6zM6 21h3v3H6zM6 42h3v3H6z" fill="#d5d8da"/><path d="M6 34h3v3H6z" fill="#47bf5b"/><path d="M31 5h20v6H31z" fill="#5a3a28"/><path d="M31 14h20v27H31z" fill="#a9c2d6"/><path d="M35 14h11v5H35z" fill="#d9bf35"/><path d="M31 30h20v11H31z" fill="#2c3f38"/><path d="M37 25q4-5 7 0l3 16H34z" fill="#26303c"/></svg><svg class="mini green-app" viewBox="0 0 68 68"><rect width="68" height="68" rx="15" fill="#5fd073"/><use href="#wchat" x="8" y="14" width="52" height="41"/></svg></div>
    <svg class="trash" viewBox="0 0 62 78"><path d="M1 12h60l-7 60q-2 6-23 6T8 72z" fill="url(#gCan)"/><ellipse cx="31" cy="13" rx="30" ry="6" fill="#555b5e" stroke="#8f9396" stroke-width="1.500"/><path d="M5 12l5-8 8 2 4-6 9 5 7-4 4 5 9-1 5 7-5 6-10-1-10 2-13-2-10 1z" fill="#dfe1e3"/><path d="M18 11l5-3 6 1-5 7zM37 9l4 3-3 6-6-1zM46 8l4 5-4 3z" fill="#34434e"/><path d="M20 9l8 0-3 4z" fill="#4fc0d8"/><path d="M35 8l5 4-4 4z" fill="#b5603a"/><path d="M18 22l4 48M44 22l-4 48" stroke="#9da1a3" stroke-width="2" opacity=".4"/></svg>
  </div>
</footer>
</body>
</html>
```
FILE: styles.css
```css
* { box-sizing: border-box; }
body {
  margin: 0; width: 2880px; height: 1800px; overflow: hidden;
  display: flex; flex-direction: column; background: #02080d;
  font-family: Inter, "Noto Sans CJK SC", sans-serif;
}
.defs { position: absolute; }
svg { display: block; flex: none; }
i { font-style: normal; display: block; }

/* system menu bar */
.menubar { height: 50px; flex: none; display: flex; align-items: center; padding-bottom: 4px; background: linear-gradient(90deg, #222930, #1a2831 35%, #132431 75%, #122634); color: #f5f6f7; font-size: 26px; line-height: 44px; font-weight: 500; white-space: nowrap; }
.menus { width: 1590px; padding-left: 41px; display: flex; align-items: center; gap: 42px; }
.apple-mark { width: 26px; height: 32px; }
.app-name { width: 87px; font-weight: 700; letter-spacing: -.1px; }
.status { display: grid; align-items: center; grid-template-columns: 75px 34px 55px 53px 72px 60px 77px 82px 93px 73px 72px 67px 65px 64px 60px auto; color: #e4e8ea; font-weight: 400; }
.wx-status { color: #e4e8ea; --eye: #1a2933; }
.input-letter { font: 600 25px Inter, sans-serif; fill: #e4e8ea; }
.clock { letter-spacing: -.5px; }

/* browser window */
.window { height: 1632px; flex: none; display: flex; flex-direction: column; border-radius: 20px; overflow: hidden; background: #1c1b22; border-top: 2px solid #606065; border-left: 1px solid #4c4c50; }
.tabbar { height: 86px; flex: none; display: flex; background: #1c1b22; }
.win-controls { width: 297px; padding-left: 25px; border-right: 2px solid #4a494f; display: flex; align-items: center; gap: 16px; }
.light { width: 24px; height: 24px; border-radius: 50%; }
.red { background: #ed6a5e; }
.amber { background: #f4bf4f; }
.green { background: #61c554; }
.archive { margin-left: 89px; }
.tabs { display: flex; padding: 6px 0 8px 8px; }
.tab { width: 326px; margin-right: 8px; padding: 0 22px 0 15px; border-radius: 8px; display: flex; align-items: center; color: #b9b9be; font-size: 22px; }
.tab .title { width: 223px; margin: 3px 5px 0 11px; overflow: hidden; white-space: nowrap; letter-spacing: .05px; -webkit-mask-image: linear-gradient(90deg, #000 88%, transparent); mask-image: linear-gradient(90deg, #000 88%, transparent); }
.tab.active { background: #42414d; color: #fbfbfe; box-shadow: 0 0 5px #0008; }
.tab-tools { display: flex; align-items: center; gap: 55px; padding-left: 22px; }

.toolbar { height: 80px; flex: none; display: flex; align-items: center; padding-left: 31px; background: #2b2a33; }
.nav-icons { width: 478px; display: flex; gap: 40px; }
.urlbar { width: 1700px; height: 64px; padding: 0 16px; border-radius: 8px; background: #1c1b22; display: flex; align-items: center; }
.lock { margin: 0 20px 0 24px; }
.url { flex: 1; font-size: 27.300px; color: #8f8e94; letter-spacing: .35px; }
.url b { font-weight: 400; color: #fbfbfe; letter-spacing: .1px; }
.qr { margin-right: 25px; }
.ext-icons { display: flex; gap: 40px; margin-left: 30px; }
.ext-icons svg { width: 32px; height: 32px; }
.puzzle, .menu-btn { position: relative; }
.ext-dot { position: absolute; left: 12px; top: 36px; width: 8px; height: 8px; border-radius: 50%; background: #54ffbd; }
.warn { position: absolute; left: 17px; top: -5px; border: 8px solid transparent; border-top: 0; border-bottom: 14px solid #f5bd5c; }

.bookmarks { height: 57px; flex: none; display: flex; align-items: center; gap: 24px; padding: 0 0 0 24px; background: #2b2a33; border-bottom: 2px solid #0c0c0d; color: #fbfbfe; font-size: 22px; line-height: 36px; white-space: nowrap; }
.bookmarks a { display: flex; align-items: center; gap: 7px; margin-right: 1px; }
.bookmarks a svg { width: 32px; height: 32px; margin-top: -2px; }
.w-icloud { width: 105px; letter-spacing: -.2px; }
.w-bing { width: 87px; }
.w-yahoo { width: 103px; letter-spacing: -.3px; }
.w-tube { width: 179px; letter-spacing: -.1px; }
.dashes { margin-left: -7px; }
.du { font: 700 12px Inter, sans-serif; fill: #fff; }
.bm-right { margin-left: auto; padding-right: 24px; display: flex; align-items: center; gap: 28px; }
.more { width: 26px; height: 26px; }
.bookmarks .phone { gap: 4px; }
.bookmarks .phone svg { width: 24px; }

/* router page */
.page { position: relative; flex: 1; display: flex; align-items: flex-start; background: #272727; overflow: hidden; font-family: "Liberation Sans", "Noto Sans CJK SC", sans-serif; font-size: 46.7px; border-bottom: 1px solid #55555a; }
.side { width: 414px; margin-right: 69px; border-right: 4px solid #e4e4e4; border-radius: 0 0 14px 0; background: #f5f5f5; overflow: hidden; }
.side ul { list-style: none; margin: 0; padding: 0; }
.side li { height: 114.200px; border-top: 3.500px solid #fff; border-bottom: 3.500px solid #ddd; display: flex; align-items: center; color: #3186c8; font-size: 41px; line-height: 60px; text-shadow: 0 3px 0 #fff; }
.side li:last-child { border-bottom: 0; }
.side .cut { height: 11.500px; border-top: 0; }
.side .before { height: 110.500px; border-bottom: 0; }
.side .current { border-top: 0; border-radius: 0 0 12px 0; background: linear-gradient(#fff, #ececec); }
.side a { margin-left: -5px; }
.side .en { margin-left: -20px; font-size: 41px; }
.side .last { margin-left: -3px; }

.form { width: 2396px; border-left: 4px solid #ececec; background: #f5f5f5; color: #333; }
.form h3 { height: 55px; margin: 0; display: flex; align-items: flex-end; overflow: hidden; background: #e2e2e2; padding-left: 29px; font-size: 46.300px; line-height: 70px; }
.form h3 span { margin-bottom: 25px; }
.row { height: 160.600px; border-top: 3px solid #ddd; display: flex; align-items: flex-start; padding: 29px 0 0 28px; }
.row label { width: 1220px; margin-top: 2px; font-size: 46.100px; font-weight: 700; line-height: 100px; white-space: nowrap; }
.row u { position: relative; text-decoration: none; display: inline-block; line-height: 62px; }
.row u::after { content: ""; position: absolute; left: 4px; right: 0; bottom: 2px; border-bottom: 3px dotted #999; }
.field, .select { width: 784px; height: 100px; border: 3.500px solid #ccc; border-radius: 10px; background: #fff; color: #555; font: inherit; line-height: 93px; padding: 2px 14px 0; }
.field { box-shadow: inset 0 4px 5px #00000014; }
.select { display: flex; justify-content: space-between; align-items: center; padding-right: 18px; }
.select svg { width: 28px; height: 18px; }
.select path { fill: none; stroke: #4a4a4a; stroke-width: 4.500px; stroke-linecap: round; }
.group { display: flex; }
.field.pass { width: 657px; border-radius: 10px 0 0 10px; border-right: 0; padding-top: 0; }
.eye { width: 126px; height: 100px; display: flex; align-items: center; justify-content: center; padding: 0 3px 5px 0; border: 3px solid #ccc; border-left-width: 2px; border-bottom-color: #b8b8b8; border-radius: 0 12px 12px 0; outline: 3px dotted #333; outline-offset: -6px; background: linear-gradient(#fff, #e4e4e4); box-shadow: 0 4px 5px #0001; }
.eye svg { width: 49px; height: 43px; }
.hint { margin: -4px 0 0 26px; line-height: 100px; color: #999; letter-spacing: -.2px; }
.final label { margin-top: -3px; }
.radios { display: flex; align-items: center; height: 100px; }
.radios i { width: 56px; height: 56px; margin: 12px 10px 0 -3px; border-radius: 50%; background: #84848e; }
.radios span { width: 97px; font-size: 44px; line-height: 60px; margin-top: 1px; }
.radios .on { background: #2a6fe0; }
.dock-shade { position: absolute; left: 0; right: 0; bottom: 0; height: 100px; background: linear-gradient(transparent, #00000022); -webkit-mask-image: linear-gradient(90deg, transparent, #000 10%, #000 87%, transparent 94%); mask-image: linear-gradient(90deg, transparent, #000 10%, #000 87%, transparent 94%); }

/* dock */
.desk { flex: 1; padding: 2px 0 0 207px; background: linear-gradient(90deg, #031019, #04141c 32%, #21150f 33.500%, #0e1220 35%, #2a2a2c 44%, #161a26 50%, #3a2d2a 53%, #0c0f16 55%, #02101a 57%, #020a12 80%, #000006); }
.dock { position: relative; width: 2466px; height: 107px; padding: 14px 0 0 13px; border: 2px solid #43484b; border-radius: 42px; background: linear-gradient(90deg, #121b21, #131c20 24%, #261e20 34%, #241f25 45%, #30231d 55%, #141c20 65%, #111a1f 80%, #16151b); display: flex; gap: 20px; }
.app { position: relative; width: 68px; height: 68px; flex: none; }
.app svg { width: 68px; height: 68px; overflow: visible; }
.app .round { border-radius: 15px; overflow: hidden; }
.app .spill { width: 72px; }
.run::after { content: ""; position: absolute; left: 30px; top: 78px; width: 8px; height: 8px; border-radius: 50%; background: #969da2; }
.badge { position: absolute; left: 46px; top: -8px; width: 32px; height: 32px; border-radius: 50%; background: #e24b3c; color: #fff; font: 400 20px/32px Inter, sans-serif; text-align: center; letter-spacing: -.5px; }
.cal { border-radius: 15px; overflow: hidden; background: #fbfaf9; text-align: center; color: #222; }
.cal span { display: block; height: 21px; background: #e35f53; color: #fff; font-size: 13px; line-height: 21px; font-weight: 500; }
.cal b { display: block; font-weight: 300; font-size: 41px; line-height: 44px; letter-spacing: -1px; }
.tv { font: 500 30px Inter, sans-serif; fill: #fff; }
.cad-a { font: 700 29px Inter, sans-serif; fill: #fff; }
.cad { font: 700 12.500px Inter, sans-serif; fill: #fff; }
.green-app { color: #fff; --eye: #4fae61; }
.rule { width: 2px; height: 78px; margin: -2px 8px 0 9px; background: #464c51; flex: none; }
.rule.second { margin: -2px 3px 0 11px; }
.thumb { position: relative; width: 78px; height: 76px; flex: none; }
.thumb.one { padding-top: 12px; }
.thumb.two { padding-top: 7px; margin-left: -10px; }
.thumb > svg { width: 78px; }
.thumb .mini { position: absolute; left: 51px; top: 46px; width: 27px; height: 27px; }
.trash { width: 62px; height: 78px; margin: -6px 0 0 -1px; }
```
